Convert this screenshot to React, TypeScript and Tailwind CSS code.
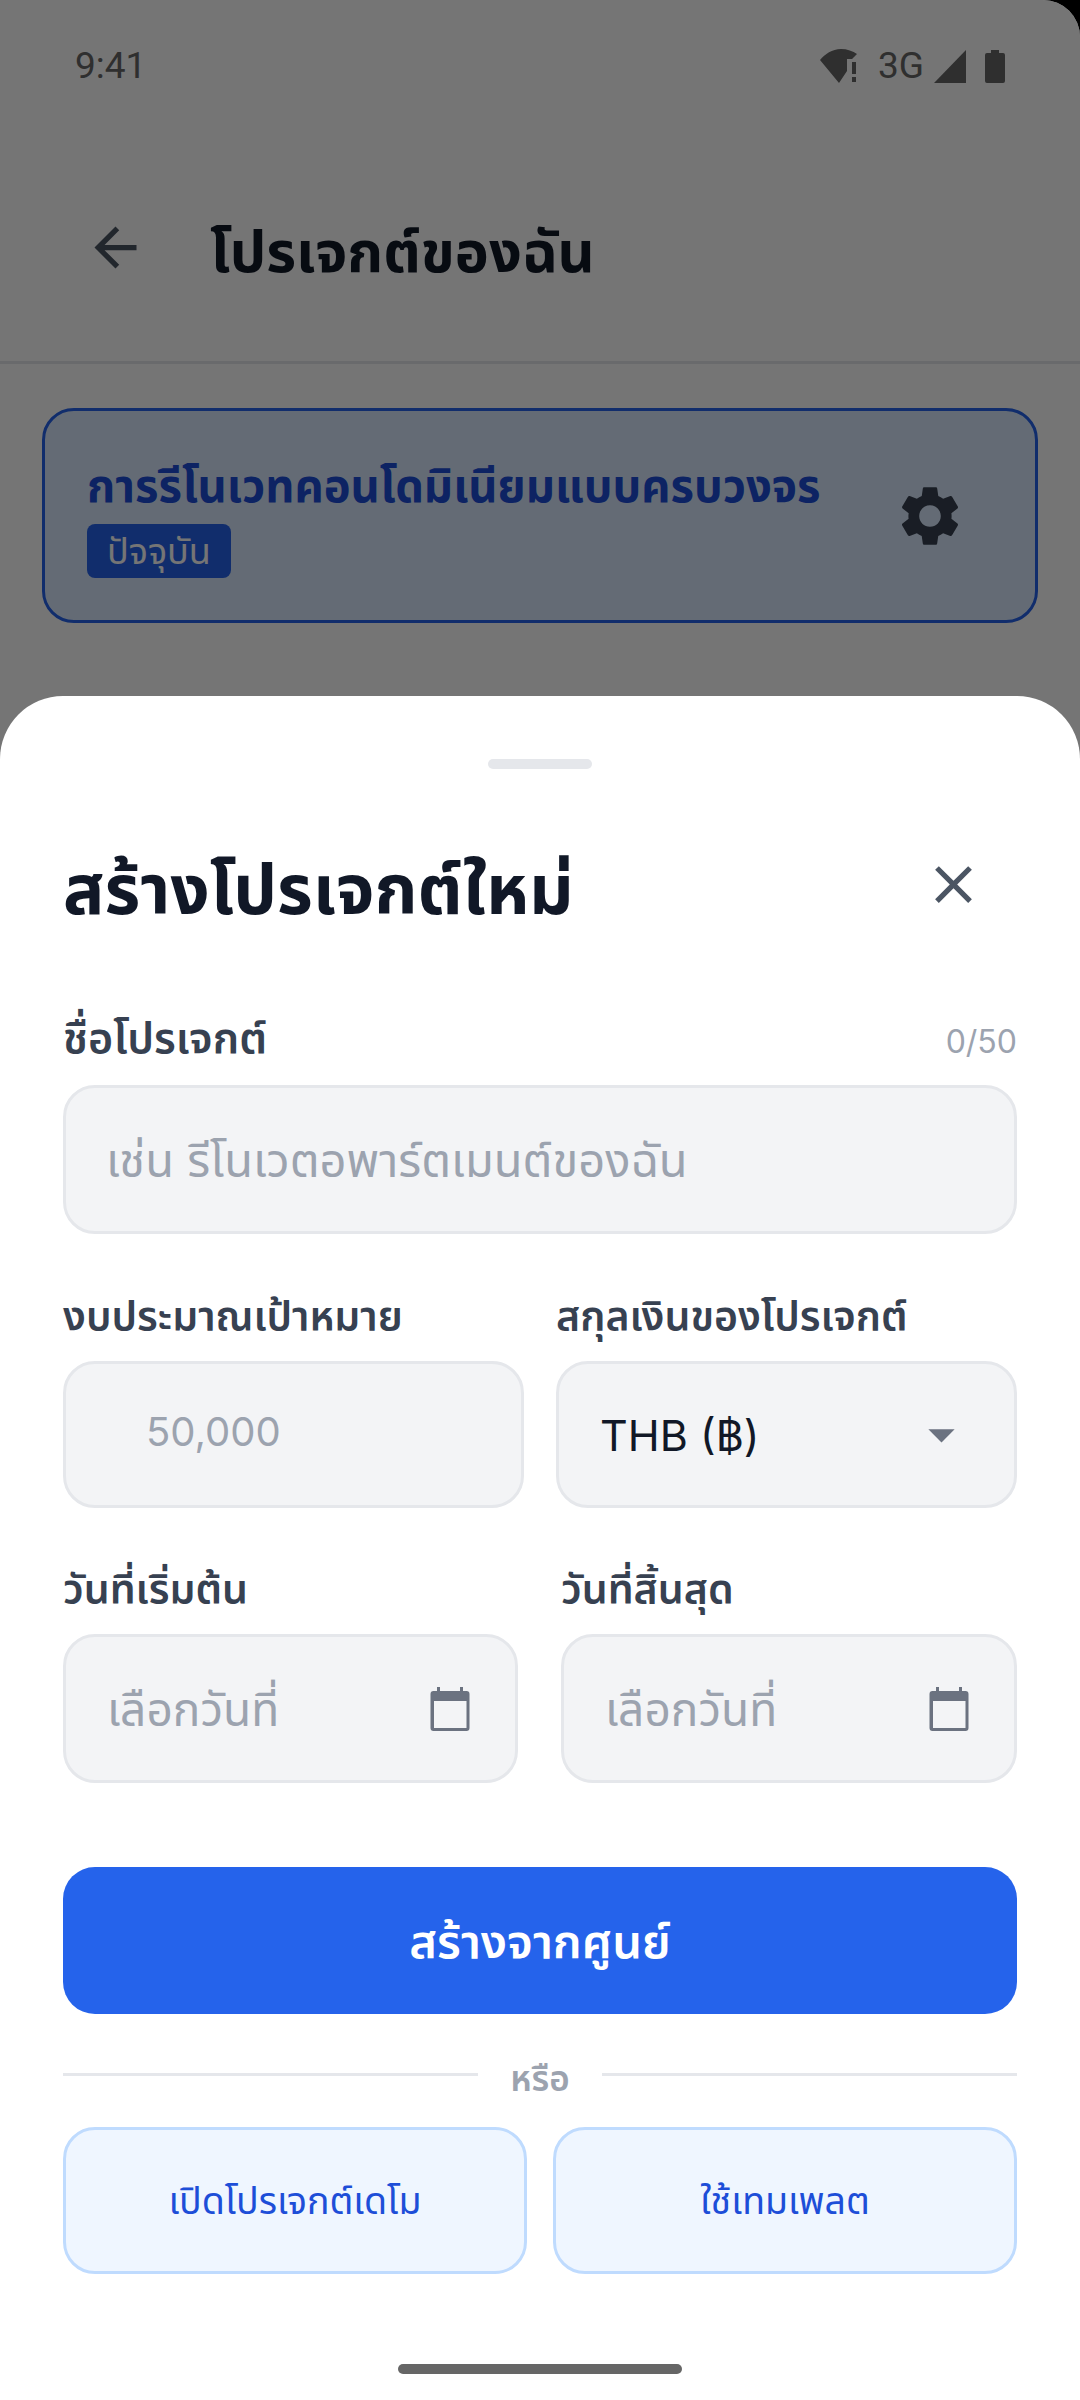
import React from 'react';

const thai = "font-['Inter','Noto_Sans','Noto_Sans_Thai','DejaVu_Sans',sans-serif]";

const WifiAlert = () => (
  <svg width="38" height="34" viewBox="0 0 38 34" fill="#666666">
    <path d="M0 11C5 5 12 0 21 0c6 0 12 2 16 5l-5 5h-5v12l-8 12z" />
    <rect x="32" y="13" width="4" height="12" />
    <rect x="32" y="28" width="4" height="5" />
  </svg>
);

const CalendarIcon = () => (
  <svg width="48" height="48" viewBox="0 0 48 48" fill="#6b7280">
    <path
      fillRule="evenodd"
      d="M11 2h3v4h20V2h3v4h3.500a3 3 0 0 1 3 3v34a3 3 0 0 1-3 3h-33a3 3 0 0 1-3-3V9a3 3 0 0 1 3-3H11zM8 16v27h32.500V16z"
    />
  </svg>
);

const Field = ({ label, className, children }: { label: string; className: string; children: React.ReactNode }) => (
  <div className={className}>
    <div className="h-[46px] text-[41px] leading-[42px] font-semibold text-[#374151] whitespace-nowrap">{label}</div>
    {children}
  </div>
);

const boxClass = 'rounded-[32px] border-[3px] border-[#e5e7eb] bg-[#f3f4f6] flex items-center';

const DateField = ({ label, className }: { label: string; className: string }) => (
  <Field label={label} className={className}>
    <div className={`${boxClass} h-[149px] mt-[20px] pl-[41px] pr-[41px] justify-between`}>
      <span className="text-[46px] leading-[60px] text-[#9ca3af]">เลือกวันที่</span>
      <CalendarIcon />
    </div>
  </Field>
);

export default function App() {
  return (
    <div className="h-[2400px] w-[1080px] bg-black">
      <div className={`relative h-[2400px] w-[1080px] overflow-hidden rounded-tr-[37px] bg-white ${thai}`}>
        {/* page behind the sheet */}
        <div className="h-[96px] px-[75px] pt-[43px] flex items-start justify-between text-[#666666] font-['Roboto',sans-serif]">
          <span className="text-[37px] leading-[46px]">9:41</span>
          <div className="flex items-center h-[46px]">
            <WifiAlert />
            <span className="ml-[20px] text-[37px] leading-[46px]">3G</span>
            <svg className="ml-[10px]" width="32" height="33" viewBox="0 0 32 33" fill="#666666"><path d="M32 0v33H0z" /></svg>
            <svg className="ml-[19px]" width="20" height="33" viewBox="0 0 20 33" fill="#666666"><path d="M6 0h8v3h4a2 2 0 0 1 2 2v26a2 2 0 0 1-2 2H2a2 2 0 0 1-2-2V5a2 2 0 0 1 2-2h4z" /></svg>
          </div>
        </div>
        <div className="h-[268px] border-b-[3px] border-[#e5e7eb] flex items-center pl-[84px] pt-[37px]">
          <svg width="63" height="63" viewBox="0 0 24 24" fill="#4b5563">
            <path d="M20 11H7.830l5.590-5.590L12 4l-8 8 8 8 1.410-1.410L7.830 13H20v-2z" />
          </svg>
          <span className="ml-[63px] pt-[8px] text-[57.500px] leading-[70px] font-bold text-[#111827]">โปรเจกต์ของฉัน</span>
        </div>
        <div className="mx-[42px] mt-[44px] h-[215px] rounded-[32px] border-[3px] border-[#2563eb] bg-[#dbeafe] pl-[42px] pr-[69px] flex items-center justify-between">
          <div className="pt-[5px]">
            <div className="text-[45.300px] leading-[54px] font-bold text-[#1d4ed8] whitespace-nowrap">การรีโนเวทคอนโดมิเนียมแบบครบวงจร</div>
            <div className="mt-[11px] inline-block rounded-[8px] bg-[#2563eb] px-[20px] text-[36px] leading-[54px] text-white">ปัจจุบัน</div>
          </div>
          <svg width="72" height="72" viewBox="0 0 24 24" fill="#374151">
            <path d="M19.140 12.940c.040-.300.060-.610.060-.940 0-.320-.020-.640-.070-.940l2.030-1.580c.180-.140.230-.410.120-.610l-1.920-3.320c-.120-.220-.370-.290-.590-.220l-2.390.960c-.500-.380-1.030-.700-1.620-.940l-.360-2.540c-.040-.240-.240-.410-.480-.410h-3.840c-.240 0-.430.170-.470.410l-.360 2.540c-.590.240-1.130.570-1.620.940l-2.390-.960c-.220-.080-.470 0-.590.220L2.740 8.870c-.120.210-.080.470.120.610l2.030 1.580c-.050.300-.090.630-.090.940s.020.640.070.940l-2.030 1.580c-.180.140-.230.410-.120.610l1.920 3.320c.120.220.370.290.590.220l2.390-.960c.500.380 1.030.700 1.620.940l.360 2.540c.050.240.240.410.480.410h3.840c.240 0 .440-.170.470-.410l.360-2.540c.590-.240 1.130-.560 1.620-.940l2.390.960c.220.080.470 0 .590-.220l1.920-3.320c.120-.220.070-.470-.120-.610l-2.010-1.580zM12 15.600c-1.980 0-3.600-1.620-3.600-3.600s1.620-3.600 3.600-3.600 3.600 1.620 3.600 3.600-1.620 3.600-3.600 3.600z" />
          </svg>
        </div>

        {/* scrim */}
        <div className="absolute inset-0 bg-black/[0.54]" />

        {/* bottom sheet */}
        <div className="absolute inset-x-0 bottom-0 h-[1704px] rounded-t-[63px] bg-white px-[63px]">
          <div className="mx-auto mt-[63px] h-[10px] w-[104px] rounded-[5px] bg-[#e5e7eb]" />
          <div className="mt-[65px] flex items-center justify-between h-[100px]">
            <span className="pt-[10px] text-[69px] leading-[100px] font-bold text-[#111827]">สร้างโปรเจกต์ใหม่</span>
            <svg className="mr-[32px]" width="63" height="63" viewBox="0 0 24 24" fill="#4b5563">
              <path d="M19 6.410L17.590 5 12 10.590 6.410 5 5 6.410 10.590 12 5 17.590 6.410 19 12 13.410 17.590 19 19 17.590 13.410 12z" />
            </svg>
          </div>

          <div className="mt-[85px] flex items-start justify-between h-[46px]">
            <span className="text-[43px] leading-[36px] font-semibold text-[#374151]">ชื่อโปรเจกต์</span>
            <span className="text-[32px] leading-[46px] text-[#9ca3af]">0/50</span>
          </div>
          <div className={`${boxClass} h-[149px] mt-[20px] pl-[40px]`}>
            <span className="text-[47px] leading-[60px] text-[#9ca3af]">เช่น รีโนเวตอพาร์ตเมนต์ของฉัน</span>
          </div>

          <div className="mt-[61px] flex justify-between">
            <Field label="งบประมาณเป้าหมาย" className="w-[461px]">
              <div className={`${boxClass} h-[147px] mt-[20px] pl-[80px] pb-[5px]`}>
                <span className="text-[40px] leading-[60px] text-[#9ca3af]">50,000</span>
              </div>
            </Field>
            <Field label="สกุลเงินของโปรเจกต์" className="w-[461px]">
              <div className={`${boxClass} h-[147px] mt-[20px] pl-[41px] pr-[41px] justify-between`}>
                <span className="text-[43px] leading-[60px] text-[#111827]">THB (฿)</span>
                <svg width="63" height="63" viewBox="0 0 24 24" fill="#6b7280"><path d="M7 10l5 5 5-5z" /></svg>
              </div>
            </Field>
          </div>

          <div className="mt-[60px] flex justify-between">
            <DateField label="วันที่เริ่มต้น" className="w-[455px]" />
            <DateField label="วันที่สิ้นสุด" className="w-[456px]" />
          </div>

          <button className="mt-[84px] block w-full h-[147px] rounded-[32px] bg-[#2563eb] text-[47px] leading-[60px] font-semibold text-white">สร้างจากศูนย์</button>

          <div className="mt-[41px] flex items-center gap-[32px] h-[46px]">
            <div className="h-[3px] flex-1 bg-[#e5e7eb] mb-[8px]" />
            <span className="text-[35px] leading-[44px] font-semibold text-[#9ca3af]">หรือ</span>
            <div className="h-[3px] flex-1 bg-[#e5e7eb] mb-[8px]" />
          </div>

          <div className="mt-[26px] flex justify-between">
            <button className="w-[464px] h-[147px] rounded-[32px] border-[3px] border-[#bfdbfe] bg-[#eff6ff] text-[37.500px] leading-[50px] text-[#1d4ed8]">เปิดโปรเจกต์เดโม</button>
            <button className="w-[464px] h-[147px] rounded-[32px] border-[3px] border-[#bfdbfe] bg-[#eff6ff] text-[37.500px] leading-[50px] text-[#1d4ed8]">ใช้เทมเพลต</button>
          </div>
        </div>

        {/* home indicator */}
        <div className="absolute bottom-[26px] left-[398px] h-[10px] w-[284px] rounded-[5px] bg-[#666666]" />
      </div>
    </div>
  );
}
